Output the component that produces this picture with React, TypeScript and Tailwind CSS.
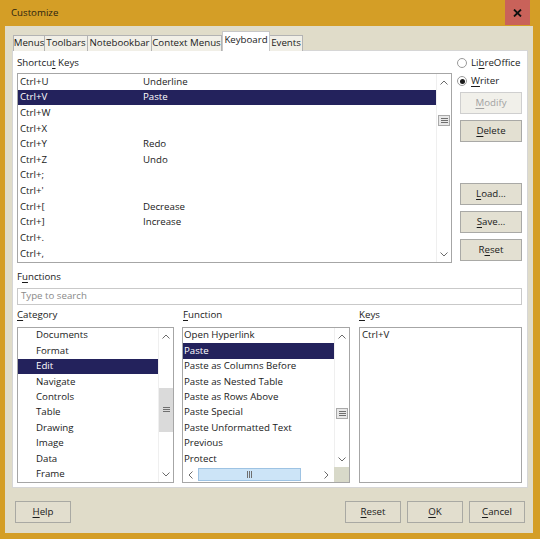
import React from "react";

function ChevUp() {
  return (
    <svg width="8" height="5" viewBox="0 0 8 5">
      <path d="M0.5 4.5 L4 1 L7.5 4.5" stroke="#6b6b6b" strokeWidth="1" fill="none" />
    </svg>
  );
}
function ChevDown() {
  return (
    <svg width="8" height="5" viewBox="0 0 8 5">
      <path d="M0.5 0.5 L4 4 L7.5 0.5" stroke="#6b6b6b" strokeWidth="1" fill="none" />
    </svg>
  );
}
function ChevLeft() {
  return (
    <svg width="5" height="8" viewBox="0 0 5 8">
      <path d="M4.5 0.5 L1 4 L4.5 7.5" stroke="#6b6b6b" strokeWidth="1" fill="none" />
    </svg>
  );
}
function ChevRight() {
  return (
    <svg width="5" height="8" viewBox="0 0 5 8">
      <path d="M0.5 0.5 L4 4 L0.5 7.5" stroke="#6b6b6b" strokeWidth="1" fill="none" />
    </svg>
  );
}
function Grip() {
  return (
    <svg width="7" height="6" viewBox="0 0 7 6">
      <path d="M0 0.5h7M0 2.5h7M0 4.5h7" stroke="#6f6f6f" strokeWidth="1" />
    </svg>
  );
}
function GripV() {
  return (
    <svg width="6" height="7" viewBox="0 0 6 7">
      <path d="M0.5 0v7M2.5 0v7M4.5 0v7" stroke="#6f6f6f" strokeWidth="1" />
    </svg>
  );
}

function U({ children }: { children: React.ReactNode }) {
  return <span className="underline underline-offset-[1.5px]">{children}</span>;
}

function VScroll({
  spacer,
  thumb,
  big,
}: {
  spacer: string;
  thumb: string;
  big?: boolean;
}) {
  return (
    <div className="w-[15px] shrink-0 flex flex-col border-l border-[#efefef] bg-white">
      <div className="h-[16px] shrink-0 flex items-center justify-center">
        <ChevUp />
      </div>
      <div className={spacer + " shrink-0"} />
      {big ? (
        <div className={thumb + " shrink-0 bg-[#dadada] flex items-center justify-center"}>
          <Grip />
        </div>
      ) : (
        <div
          className={
            thumb +
            " shrink-0 mx-[1px] bg-[#e8e8e8] border border-[#a9a9a9] flex items-center justify-center"
          }
        >
          <Grip />
        </div>
      )}
      <div className="flex-1" />
      <div className="h-[16px] shrink-0 flex items-center justify-center">
        <ChevDown />
      </div>
    </div>
  );
}

const shortcuts: [string, string][] = [
  ["Ctrl+U", "Underline"],
  ["Ctrl+V", "Paste"],
  ["Ctrl+W", ""],
  ["Ctrl+X", ""],
  ["Ctrl+Y", "Redo"],
  ["Ctrl+Z", "Undo"],
  ["Ctrl+;", ""],
  ["Ctrl+'", ""],
  ["Ctrl+[", "Decrease"],
  ["Ctrl+]", "Increase"],
  ["Ctrl+.", ""],
  ["Ctrl+,", ""],
];

const categories = [
  "Documents",
  "Format",
  "Edit",
  "Navigate",
  "Controls",
  "Table",
  "Drawing",
  "Image",
  "Data",
  "Frame",
];

const functions = [
  "Open Hyperlink",
  "Paste",
  "Paste as Columns Before",
  "Paste as Nested Table",
  "Paste as Rows Above",
  "Paste Special",
  "Paste Unformatted Text",
  "Previous",
  "Protect",
];

function SideButton({ children, disabled }: { children: React.ReactNode; disabled?: boolean }) {
  return (
    <div
      className={
        disabled
          ? "w-[62px] h-[22px] self-end flex items-center justify-center border border-[#cfcfcf] bg-[#f1f0ea] text-[#a2a2a2]"
          : "w-[62px] h-[22px] self-end flex items-center justify-center border border-[#a9a9a6] bg-[#e3e0d2]"
      }
    >
      {children}
    </div>
  );
}

function FootButton({ children }: { children: React.ReactNode }) {
  return (
    <div className="w-[56px] h-[22px] flex items-center justify-center border border-[#a9a9a3] bg-[#e2dece]">
      {children}
    </div>
  );
}

function Radio({ checked }: { checked?: boolean }) {
  return (
    <div className="w-[10px] h-[10px] rounded-full border border-[#9a9a9a] bg-white flex items-center justify-center">
      {checked ? <div className="w-[5px] h-[5px] rounded-full bg-[#1a1a1a]" /> : null}
    </div>
  );
}

export default function App() {
  return (
    <div className="w-[540px] h-[539px] bg-[#d49e26] flex flex-col pl-[5px] pr-[7px] pb-[6px] font-['Open_Sans',sans-serif] text-[9.7px] text-[#1a1a1a] overflow-hidden">
      {/* Title bar */}
      <div className="h-[26px] shrink-0 flex justify-between">
        <div className="pl-[6px] flex items-center text-[#2b2310]">Customize</div>
        <div className="w-[25px] h-[25px] mr-[3px] bg-[#c9625a] flex items-center justify-center">
          <svg width="9" height="8" viewBox="0 0 9 8">
            <path d="M1 0.5 L8 7.5 M8 0.5 L1 7.5" stroke="#111" strokeWidth="1.8" />
          </svg>
        </div>
      </div>

      {/* Body */}
      <div className="flex-1 bg-[#e0dcc9] flex flex-col pl-[7px] pr-[5px]">
        {/* Tabs */}
        <div className="pt-[5px] flex items-end pl-[1px] relative z-10 -mb-px">
          <div className="w-[32px] h-[16px] flex items-center justify-center bg-[#f1efe7] border border-b-0 border-[#b3b3b3]">
            Menus
          </div>
          <div className="w-[43px] h-[16px] flex items-center justify-center bg-[#f1efe7] border border-l-0 border-b-0 border-[#b3b3b3]">
            Toolbars
          </div>
          <div className="w-[64px] h-[16px] flex items-center justify-center bg-[#f1efe7] border border-l-0 border-b-0 border-[#b3b3b3]">
            Notebookbar
          </div>
          <div className="w-[70px] h-[16px] flex items-center justify-center bg-[#f1efe7] border border-l-0 border-b-0 border-[#b3b3b3]">
            Context Menus
          </div>
          <div className="w-[48px] h-[20px] flex items-center justify-center bg-white border border-b-0 border-[#c8c8c8] pb-[2px]">
            Keyboard
          </div>
          <div className="w-[33px] h-[16px] flex items-center justify-center bg-[#f1efe7] border border-l-0 border-b-0 border-[#b3b3b3]">
            Events
          </div>
        </div>

        {/* Panel */}
        <div className="h-[438px] shrink-0 bg-white border border-[#d6d6d6] flex flex-col pl-[4px] pr-[5px] pt-[5px] pb-[4px]">
          {/* Top section */}
          <div className="flex gap-[5px]">
            <div className="flex-1 flex flex-col">
              <div className="h-[14px] flex items-center">
                <span>
                  Shortcu<U>t</U> Keys
                </span>
              </div>
              <div className="mt-[3px] h-[190px] border border-[#a6a6a6] flex">
                <div className="flex-1 flex flex-col">
                  {shortcuts.map(([k, f], i) => (
                    <div
                      key={k}
                      className={
                        i === 1
                          ? "h-[15.67px] flex items-center pl-[2px] bg-[#23225c] text-white"
                          : "h-[15.67px] flex items-center pl-[2px]"
                      }
                    >
                      <div className="w-[123px]">{k}</div>
                      <div>{f}</div>
                    </div>
                  ))}
                </div>
                <VScroll spacer="h-[25px]" thumb="h-[11px]" />
              </div>
            </div>
            <div className="w-[65px] shrink-0 flex flex-col justify-between pb-[2px]">
              <div className="flex flex-col">
                <div className="h-[14px] flex items-center gap-[4px]">
                  <Radio />
                  <span>
                    Li<U>b</U>reOffice
                  </span>
                </div>
                <div className="h-[14px] mt-[4px] flex items-center gap-[4px]">
                  <Radio checked />
                  <span>
                    <U>W</U>riter
                  </span>
                </div>
                <div className="mt-[4px] flex flex-col gap-[6px]">
                  <SideButton disabled>
                    <span>
                      <U>M</U>odify
                    </span>
                  </SideButton>
                  <SideButton>
                    <span>
                      <U>D</U>elete
                    </span>
                  </SideButton>
                </div>
              </div>
              <div className="flex flex-col gap-[6px]">
                <SideButton>
                  <span>
                    <U>L</U>oad...
                  </span>
                </SideButton>
                <SideButton>
                  <span>
                    <U>S</U>ave...
                  </span>
                </SideButton>
                <SideButton>
                  <span>
                    R<U>e</U>set
                  </span>
                </SideButton>
              </div>
            </div>
          </div>

          {/* Functions */}
          <div className="mt-[7px] h-[14px] flex items-center">
            <span>
              F<U>u</U>nctions
            </span>
          </div>
          <div className="mt-[4px] h-[17px] border border-[#c9c9c9] flex items-center pl-[3px] text-[#8a8a8a]">
            Type to search
          </div>

          {/* Bottom lists */}
          <div className="mt-[3px] flex">
            {/* Category */}
            <div className="w-[157px] shrink-0 flex flex-col">
              <div className="h-[14px] flex items-center">
                <span>
                  <U>C</U>ategory
                </span>
              </div>
              <div className="mt-[5px] h-[156px] border border-[#a6a6a6] flex">
                <div className="flex-1 flex flex-col">
                  {categories.map((c, i) => (
                    <div
                      key={c}
                      className={
                        i === 2
                          ? "h-[15.4px] flex items-center pl-[18px] bg-[#23225c] text-white"
                          : "h-[15.4px] flex items-center pl-[18px]"
                      }
                    >
                      {c}
                    </div>
                  ))}
                </div>
                <VScroll spacer="h-[44px]" thumb="h-[44px]" big />
              </div>
            </div>

            {/* Function */}
            <div className="ml-[8px] w-[168px] shrink-0 flex flex-col">
              <div className="h-[14px] flex items-center pl-[1px]">
                <span>
                  <U>F</U>unction
                </span>
              </div>
              <div className="mt-[5px] h-[156px] border border-[#a6a6a6] flex flex-col">
                <div className="flex-1 flex">
                  <div className="flex-1 flex flex-col overflow-hidden">
                    {functions.map((f, i) => (
                      <div
                        key={f}
                        className={
                          i === 1
                            ? "h-[15.4px] shrink-0 flex items-center pl-[1px] bg-[#23225c] text-white whitespace-nowrap"
                            : "h-[15.4px] shrink-0 flex items-center pl-[1px] whitespace-nowrap"
                        }
                      >
                        {f}
                      </div>
                    ))}
                  </div>
                  <VScroll spacer="h-[64px]" thumb="h-[11px]" />
                </div>
                <div className="h-[15px] shrink-0 flex">
                  <div className="w-[15px] flex items-center justify-center">
                    <ChevLeft />
                  </div>
                  <div className="w-[103px] my-[1px] bg-[#cce4f7] border border-[#9ec3e3] flex items-center justify-center">
                    <GripV />
                  </div>
                  <div className="flex-1" />
                  <div className="w-[15px] flex items-center justify-center">
                    <ChevRight />
                  </div>
                  <div className="w-[15px] bg-[#d8d9c9]" />
                </div>
              </div>
            </div>

            {/* Keys */}
            <div className="ml-[9px] flex-1 flex flex-col">
              <div className="h-[14px] flex items-center">
                <span>
                  <U>K</U>eys
                </span>
              </div>
              <div className="mt-[5px] h-[156px] border border-[#a6a6a6] flex flex-col pl-[2px]">
                <div className="h-[15.4px] flex items-center">Ctrl+V</div>
              </div>
            </div>
          </div>
        </div>

        {/* Footer */}
        <div className="pt-[13px] flex px-[3px]">
          <FootButton>
            <span>
              <U>H</U>elp
            </span>
          </FootButton>
          <div className="flex-1" />
          <div className="flex gap-[6px]">
            <FootButton>
              <span>
                <U>R</U>eset
              </span>
            </FootButton>
            <FootButton>
              <span>
                <U>O</U>K
              </span>
            </FootButton>
            <FootButton>
              <span>
                <U>C</U>ancel
              </span>
            </FootButton>
          </div>
        </div>
      </div>
    </div>
  );
}
